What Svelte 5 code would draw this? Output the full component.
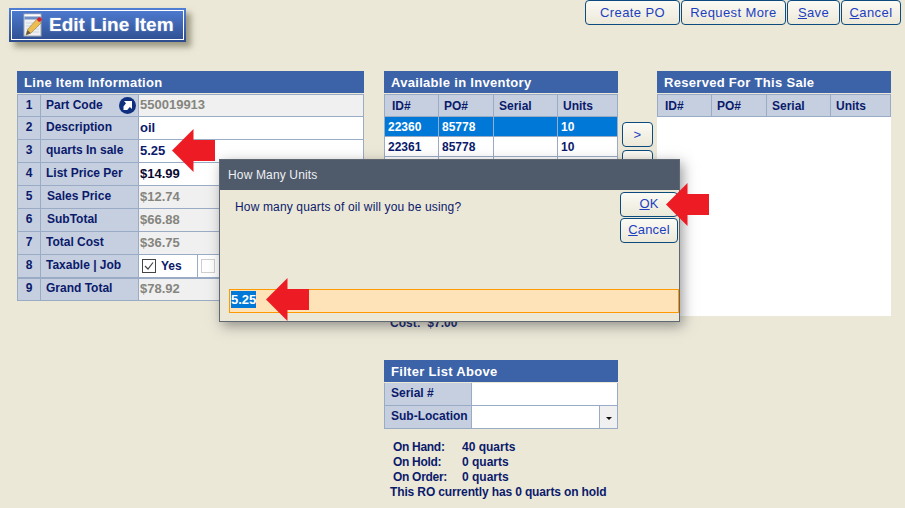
<script lang="ts">
  const lineItems = [
    { n: 1, label: "Part Code", value: "550019913", kind: "readonly", link: true },
    { n: 2, label: "Description", value: "oil", kind: "edit" },
    { n: 3, label: "quarts In sale", value: "5.25", kind: "edit" },
    { n: 4, label: "List Price Per", value: "$14.99", kind: "edit black" },
    { n: 5, label: "Sales Price", value: "$12.74", kind: "readonly", nudge: true },
    { n: 6, label: "SubTotal", value: "$66.88", kind: "readonly", nudge: true },
    { n: 7, label: "Total Cost", value: "$36.75", kind: "readonly" },
  ];
  const columns = ["ID#", "PO#", "Serial", "Units"];
  const stock = [
    { id: "22360", po: "85778", serial: "", units: "10", selected: true },
    { id: "22361", po: "85778", serial: "", units: "10" },
    { id: "22362", po: "85778", serial: "", units: "10" },
    { id: "22363", po: "85778", serial: "", units: "10" },
  ];
  const stats = [
    ["On Hand:", "40 quarts"],
    ["On Hold:", "0 quarts"],
    ["On Order:", "0 quarts"],
  ];
</script>

{#snippet arrow(cls: string)}
  <svg class="arrow {cls}" width="43" height="43" viewBox="0 0 43 43" aria-hidden="true">
    <path d="M0 21.5 21.5 0V11H43V32H21.5V43Z" fill="#ed1c24" />
  </svg>
{/snippet}

<div class="page">
  <header class="top">
    <div class="title">
      <div class="title-inner">
        <svg width="20" height="24" viewBox="0 0 20 24" aria-hidden="true">
          <rect x="1" y="1" width="17" height="22" fill="#eef0f4" stroke="#a4a9b2" />
          <rect x="1.5" y="1.5" width="16" height="2" fill="#fff" />
          <rect x="1.5" y="3.5" width="16" height="3" fill="#6f8fc4" />
          <path d="M3 10h13M3 13h13M3 16h13M3 19h13" stroke="#ccd2dc" />
          <path d="M3 22 5 16 14 6 18 10 8 20Z" fill="#ecbe52" stroke="#9a7a3a" stroke-width=".6" />
          <path d="M3 22 4.6 17 7.8 20.2Z" fill="#6a5a44" />
          <circle cx="16.5" cy="6.5" r="2.3" fill="#d8222a" />
        </svg>
        <span>Edit Line Item</span>
      </div>
    </div>
    <div class="actions">
      <button class="btn w95">Create PO</button>
      <button class="btn w105">Request More</button>
      <button class="btn w53"><u>S</u>ave</button>
      <button class="btn w60"><u>C</u>ancel</button>
    </div>
  </header>

  <main class="panels">
    <section class="info">
      <h2>Line Item Information</h2>
      <div class="info-grid">
        {#each lineItems as row}
          <div class="num">{row.n}</div>
          <div class="label" class:nudge={row.nudge}>
            {row.label}
            {#if row.link}
              <svg class="link" width="17" height="17" viewBox="0 0 17 17" aria-hidden="true">
                <circle cx="8.5" cy="8.5" r="8.5" fill="#0f2f7f" />
                <path d="M5 4h8v8l-2.2-2-2.6 3H4.5V9.5L7 6.2Z" fill="#fff" />
              </svg>
            {/if}
          </div>
          <div class="value {row.kind}">{row.value}</div>
        {/each}
        <div class="num">8</div>
        <div class="label">Taxable | Job</div>
        <div class="value split">
          <div class="check-cell">
            <svg width="14" height="14" viewBox="0 0 14 14" aria-hidden="true">
              <rect x=".5" y=".5" width="13" height="13" fill="#fff" stroke="#444" />
              <path d="M3 7l3 3 5-6.5" fill="none" stroke="#444" stroke-width="1.2" />
            </svg>
            <b>Yes</b>
          </div>
          <div class="check-cell second"><span class="empty-box"></span></div>
        </div>
        <div class="num thick">9</div>
        <div class="label thick">Grand Total</div>
        <div class="value readonly thick">$78.92</div>
      </div>
    </section>

    <section class="stock">
      <h2>Available in Inventory</h2>
      <div class="list">
        <div class="list-row head">
          {#each columns as c}<div>{c}</div>{/each}
        </div>
        {#each stock as s}
          <div class="list-row item" class:selected={s.selected}>
            <div>{s.id}</div>
            <div>{s.po}</div>
            <div>{s.serial}</div>
            <div>{s.units}</div>
          </div>
        {/each}
      </div>
      <p class="cost">Cost:&nbsp; $7.00</p>

      <h2 class="filter-title">Filter List Above</h2>
      <div class="filter">
        <div class="f-label">Serial #</div>
        <div class="f-input"></div>
        <div class="f-label">Sub-Location</div>
        <div class="f-input select"><span class="drop"><i></i></span></div>
      </div>

      <div class="stats">
        {#each stats as [name, qty]}
          <div class="stat"><span>{name}</span><span>{qty}</span></div>
        {/each}
        <div class="hold">This RO currently has 0 quarts on hold</div>
      </div>
    </section>

    <div class="movers">
      <button class="btn move">&gt;</button>
      <button class="btn move">&lt;</button>
    </div>

    <section class="reserved">
      <h2>Reserved For This Sale</h2>
      <div class="list">
        <div class="list-row head">
          {#each columns as c}<div>{c}</div>{/each}
        </div>
        <div class="blank"></div>
      </div>
    </section>
  </main>

  <div class="dialog">
    <div class="dialog-title">How Many Units</div>
    <div class="dialog-body">
      <p>How many quarts of oil will you be using?</p>
      <div class="dialog-btns">
        <button class="btn dlg"><u>O</u>K</button>
        <button class="btn dlg"><u>C</u>ancel</button>
      </div>
    </div>
    <div class="dialog-input"><span>5.25</span></div>
  </div>

  {@render arrow("a1")}
  {@render arrow("a2")}
  {@render arrow("a3")}
</div>

<style>
  :global(body) {
    margin: 0;
    background: #ebe8d8;
  }
  .page {
    position: relative;
    width: 905px;
    height: 508px;
    overflow: hidden;
    font-family: "Liberation Sans", Arial, sans-serif;
    font-size: 12px;
    color: #0b1a6b;
  }
  .top {
    display: flex;
    justify-content: space-between;
    align-items: flex-start;
    height: 71px;
  }
  .title {
    margin: 8px 0 0 9px;
    width: 177px;
    height: 34px;
    box-sizing: border-box;
    padding: 2px;
    background: linear-gradient(#4f7ed4, #2d4c8e);
    box-shadow: 5px 5px 6px rgba(90, 85, 60, 0.55);
  }
  .title-inner {
    display: flex;
    align-items: center;
    gap: 6px;
    height: 100%;
    box-sizing: border-box;
    border: 1px solid #fff;
    padding-left: 11px;
    color: #fff;
    font-size: 19px;
    font-weight: bold;
    text-shadow: 0 0 2px rgba(255, 255, 255, 0.35);
  }
  .actions {
    display: flex;
    gap: 1px;
    padding-right: 4px;
  }
  .btn {
    height: 25px;
    padding: 0;
    border: 1px solid #0d4a7d;
    border-radius: 4px;
    background: linear-gradient(#fbfaf4, #ece9d9);
    color: #1c3fc0;
    font-family: inherit;
    font-size: 13px;
    letter-spacing: 0.4px;
  }
  .w95 { width: 95px; }
  .w105 { width: 105px; }
  .w53 { width: 53px; }
  .w60 { width: 60px; }

  .panels {
    display: flex;
    align-items: flex-start;
    padding-left: 17px;
  }
  h2 {
    margin: 0;
    height: 22px;
    padding-left: 7px;
    background: #3c62a8;
    color: #fff;
    font-size: 13px;
    font-weight: bold;
    line-height: 23px;
    letter-spacing: 0.3px;
  }
  .info {
    width: 347px;
    margin-right: 20px;
  }
  .info-grid {
    display: grid;
    grid-template-columns: 23px 98px 1fr;
    grid-template-rows: 22px;
    grid-auto-rows: 23px;
    margin-top: 1px;
    border: 1px solid #9aabc5;
    border-bottom: 0;
  }
  .num,
  .label,
  .value {
    display: flex;
    align-items: center;
    box-sizing: border-box;
    padding-bottom: 2px;
    border-bottom: 1px solid #9aabc5;
    font-weight: bold;
  }
  .num {
    justify-content: center;
    background: #c5cfdf;
    border-right: 1px solid #9aabc5;
  }
  .label {
    position: relative;
    padding-left: 5px;
    background: #c5cfdf;
    border-right: 1px solid #9aabc5;
  }
  .label.nudge {
    padding-left: 6px;
  }
  .link {
    position: absolute;
    right: 2px;
    top: 2px;
  }
  .value {
    padding-left: 1px;
    background: #fff;
    font-size: 13px;
  }
  .value.readonly {
    background: #f0f0f0;
    color: #85857f;
  }
  .value.black {
    color: #0a0a30;
  }
  .value.split {
    padding: 0;
  }
  .check-cell {
    display: flex;
    align-items: center;
    gap: 5px;
    width: 59px;
    height: 100%;
    box-sizing: border-box;
    padding-left: 3px;
    border-right: 1px solid #9aabc5;
    font-size: 12px;
  }
  .check-cell.second {
    flex: 1;
    border-right: 0;
  }
  .empty-box {
    width: 12px;
    height: 12px;
    border: 1px solid #cfcfcf;
  }
  .thick {
    margin-top: -1px;
    padding-bottom: 3px;
    border-top: 2px solid #9aabc5;
  }

  .stock {
    width: 234px;
  }
  .list {
    margin-top: 1px;
  }
  .list-row {
    display: grid;
    grid-template-columns: 55px 55px 64px 60px;
  }
  .list-row > div {
    box-sizing: border-box;
    display: flex;
    align-items: center;
    border-right: 1px solid #9aabc5;
    border-bottom: 1px solid #9aabc5;
    font-weight: bold;
  }
  .list-row > div:first-child {
    border-left: 1px solid #9aabc5;
  }
  .head {
    height: 23px;
    background: #c5cfdf;
    border-top: 1px solid #9aabc5;
    box-sizing: border-box;
  }
  .head > div {
    padding-left: 7px;
  }
  .head > div:nth-child(n + 2) {
    padding-left: 5px;
  }
  .item {
    height: 20px;
    background: #fff;
  }
  .item > div {
    padding-left: 3px;
  }
  .selected {
    background: #0078d7;
    color: #fff;
  }
  .cost {
    margin: 119px 0 0 6px;
    height: 14px;
    line-height: 14px;
    font-weight: bold;
  }
  .filter-title {
    margin-top: 30px;
  }
  .filter {
    display: grid;
    grid-template-columns: 87px 1fr;
    grid-auto-rows: 23px;
    margin-top: 1px;
    border: 1px solid #9aabc5;
    border-top: 0;
    border-bottom: 0;
  }
  .f-label,
  .f-input {
    box-sizing: border-box;
    border-bottom: 1px solid #9aabc5;
  }
  .f-label {
    display: flex;
    align-items: center;
    padding: 0 0 2px 6px;
    background: #c5cfdf;
    border-right: 1px solid #9aabc5;
    font-weight: bold;
  }
  .f-input {
    background: #fff;
    display: flex;
    justify-content: flex-end;
  }
  .drop {
    width: 17px;
    display: flex;
    align-items: center;
    justify-content: center;
    background: #f0f0f0;
    border-left: 1px solid #9aabc5;
  }
  .drop i {
    margin-top: 3px;
    border: 3px solid transparent;
    border-top: 3px solid #111;
    border-bottom: 0;
  }
  .stats {
    margin: 11px 0 0 6px;
    font-weight: bold;
    line-height: 15px;
  }
  .stat {
    display: flex;
    padding-left: 3px;
  }
  .stat span:first-child {
    width: 69px;
    letter-spacing: -0.3px;
  }
  .hold {
    letter-spacing: -0.13px;
  }

  .movers {
    display: flex;
    flex-direction: column;
    gap: 3px;
    width: 39px;
    padding: 51px 0 0 4px;
    box-sizing: border-box;
  }
  .move {
    width: 31px;
    height: 25px;
  }
  .reserved {
    width: 234px;
  }
  .blank {
    height: 199px;
    background: #fff;
  }

  .dialog {
    position: absolute;
    left: 219px;
    top: 159px;
    width: 461px;
    height: 163px;
    box-sizing: border-box;
    display: flex;
    flex-direction: column;
    background: #ebe8d8;
    border: 1px solid #5f6872;
    box-shadow: 3px 4px 12px rgba(60, 60, 60, 0.5);
  }
  .dialog-title {
    height: 30px;
    flex: none;
    padding-left: 8px;
    background: #4f5b6b;
    color: #eef0f2;
    font-size: 12px;
    line-height: 30px;
    letter-spacing: 0.15px;
  }
  .dialog-body {
    flex: 1;
    display: flex;
    justify-content: space-between;
    align-items: flex-start;
    padding: 2px 1px 0 15px;
  }
  .dialog-body p {
    margin: 8px 0 0;
    letter-spacing: 0.15px;
  }
  .dialog-btns {
    display: flex;
    flex-direction: column;
    gap: 1px;
  }
  .dlg {
    width: 58px;
    padding-bottom: 2px;
    letter-spacing: 0.2px;
  }
  .dialog-input {
    height: 24px;
    margin: 0 0 8px 9px;
    box-sizing: border-box;
    padding: 1px 0 0 1px;
    background: #fee3b8;
    border: 1px solid #ff9900;
    font-size: 13px;
    font-weight: bold;
  }
  .dialog-input span {
    display: inline-block;
    height: 17px;
    line-height: 17px;
    background: #0078d7;
    color: #fff;
  }
  .arrow {
    position: absolute;
  }
  .a1 { left: 172px; top: 129px; }
  .a2 { left: 266px; top: 278px; }
  .a3 { left: 666px; top: 183px; }
</style>
